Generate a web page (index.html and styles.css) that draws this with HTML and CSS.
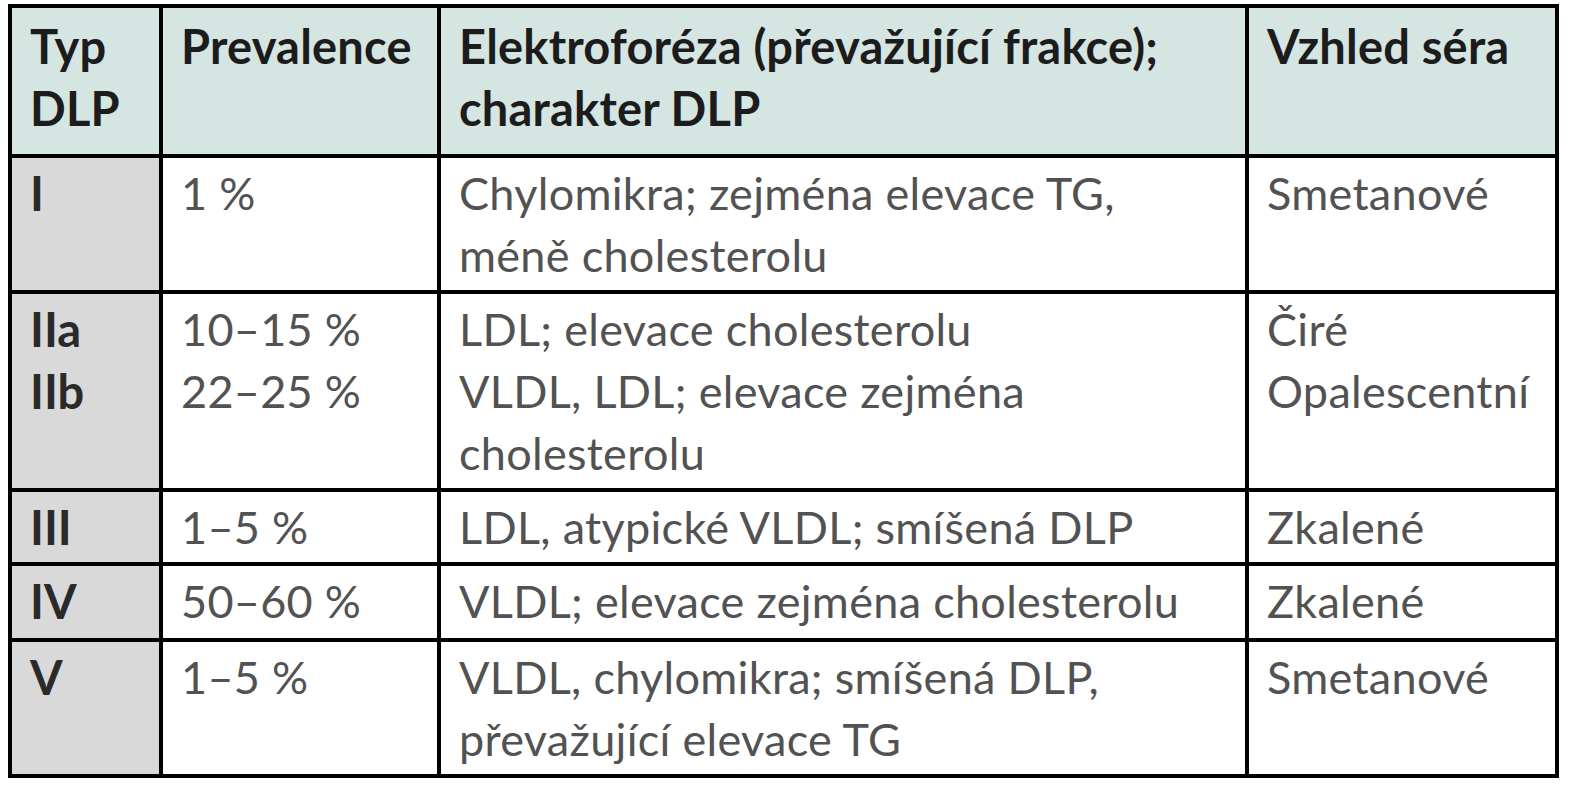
FILE: index.html
```html
<!DOCTYPE html>
<html lang="cs">
<head>
<meta charset="utf-8">
<title>Typy DLP</title>
<link rel="stylesheet" href="styles.css">
</head>
<body>
<table class="dlp">
  <colgroup>
    <col class="c-typ">
    <col class="c-prev">
    <col class="c-elf">
    <col class="c-serum">
  </colgroup>
  <thead>
    <tr class="head">
      <th>Typ<br>DLP</th>
      <th>Prevalence</th>
      <th>Elektroforéza (převažující frakce);<br>charakter DLP</th>
      <th>Vzhled séra</th>
    </tr>
  </thead>
  <tbody>
    <tr class="r1">
      <td class="typ">I</td>
      <td>1 %</td>
      <td>Chylomikra; zejména elevace TG,<br>méně cholesterolu</td>
      <td>Smetanové</td>
    </tr>
    <tr class="r2">
      <td class="typ">IIa<br>IIb</td>
      <td>10–15 %<br>22–25 %</td>
      <td>LDL; elevace cholesterolu<br>VLDL, LDL; elevace zejména<br>cholesterolu</td>
      <td>Čiré<br>Opalescentní</td>
    </tr>
    <tr class="r3">
      <td class="typ">III</td>
      <td>1–5 %</td>
      <td>LDL, atypické VLDL; smíšená DLP</td>
      <td>Zkalené</td>
    </tr>
    <tr class="r4">
      <td class="typ">IV</td>
      <td>50–60 %</td>
      <td>VLDL; elevace zejména cholesterolu</td>
      <td>Zkalené</td>
    </tr>
    <tr class="r5">
      <td class="typ">V</td>
      <td>1–5 %</td>
      <td>VLDL, chylomikra; smíšená DLP,<br>převažující elevace TG</td>
      <td>Smetanové</td>
    </tr>
  </tbody>
</table>
</body>
</html>
```

FILE: styles.css
```css
html, body {
  margin: 0;
  padding: 0;
  background: #ffffff;
}

body {
  padding: 4px 0 0 8px;
  font-family: Lato, "Liberation Sans", sans-serif;
}

.dlp {
  border-collapse: collapse;
  table-layout: fixed;
  width: 1551px;
  border: 4px solid #000;
}

.c-typ { width: 151px; }
.c-prev { width: 278px; }
.c-elf { width: 808px; }
.c-serum { width: 310px; }

.dlp th,
.dlp td {
  border: 4px solid #000;
  text-align: left;
  vertical-align: top;
  line-height: 62px;
  padding: 4px 14px 4px 18px;
}

.dlp th {
  background: #d5e5e2;
  color: #1c1c1c;
  font-weight: 700;
  font-size: 47px;
  letter-spacing: 0.2px;
  padding-top: 7px;
  padding-bottom: 15px;
}

.dlp td {
  color: #525252;
  font-weight: 400;
  font-size: 45px;
  letter-spacing: 0.3px;
}

.dlp tr.r4 td {
  padding-bottom: 6px;
}

.dlp td.typ {
  background: #d9d9d9;
  color: #2a2a2a;
  font-weight: 700;
  font-size: 47px;
  letter-spacing: 0;
}
```
